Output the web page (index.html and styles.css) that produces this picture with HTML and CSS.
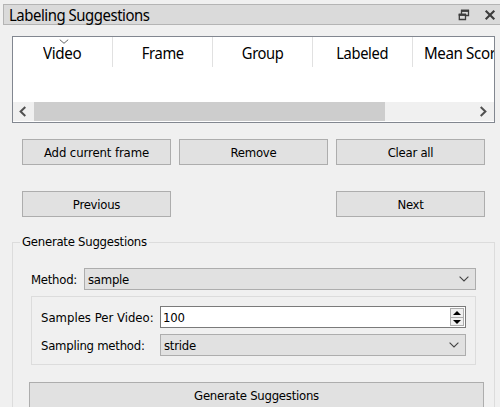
FILE: index.html
```html
<!DOCTYPE html>
<html lang="en">
<head>
<meta charset="utf-8">
<title>Labeling Suggestions</title>
<link rel="stylesheet" href="styles.css">
</head>
<body>
<header class="titlebar">
  <h1>Labeling Suggestions</h1>
  <svg class="float-icon" width="12" height="12" viewBox="0 0 12 12"><g fill="none" stroke="#3c3c3c" stroke-width="1.300"><path d="M3.500 5V1.500H10.500V6.500H8"/><path d="M3 1.800H11" stroke-width="2.200"/><path d="M1.300 5.500H7.500V10.500H1.300Z"/><path d="M.7 5.800H8.100" stroke-width="2.200"/></g></svg>
  <svg class="close-icon" width="12" height="12" viewBox="0 0 12 12"><path d="M1.700 1.700L10.300 10.300M10.300 1.700L1.700 10.300" fill="none" stroke="#3c3c3c" stroke-width="2.100"/></svg>
</header>
<main>
  <section class="table">
    <div class="columns">
      <div class="column"><svg class="sort" width="10" height="6" viewBox="0 0 10 6"><path d="M.8.7L5 4.300L9.200.7" fill="none" stroke="#666"/></svg><span>Video</span></div>
      <div class="column"><span>Frame</span></div>
      <div class="column"><span>Group</span></div>
      <div class="column"><span>Labeled</span></div>
      <div class="column last"><span>Mean Score</span></div>
    </div>
    <div class="scrollbar">
      <svg width="21" height="19" viewBox="0 0 21 19"><path d="M12.300 5L7.600 9.500L12.300 14" fill="none" stroke="#505050" stroke-width="2"/></svg>
      <div class="thumb"></div>
      <svg class="right" width="21" height="19" viewBox="0 0 21 19"><path d="M7.700 5L12.400 9.500L7.700 14" fill="none" stroke="#505050" stroke-width="2"/></svg>
    </div>
  </section>
  <div class="buttons">
    <button class="add">Add current frame</button>
    <button>Remove</button>
    <button>Clear all</button>
    <button>Previous</button>
    <button class="next">Next</button>
  </div>
  <fieldset>
    <legend>Generate Suggestions</legend>
    <div class="method">
      <label>Method:</label>
      <div class="combo"><span>sample</span><svg width="10" height="6" viewBox="0 0 10 6"><path d="M.6.7L5 5L9.400.7" fill="none" stroke="#444" stroke-width="1.100"/></svg></div>
    </div>
    <div class="options">
      <label class="wide">Samples Per Video:</label>
      <div class="spin"><span>100</span>
        <div class="steps">
          <i><svg width="8" height="4" viewBox="0 0 8 4"><path d="M4 0L8 4H0Z"/></svg></i>
          <i><svg width="8" height="4" viewBox="0 0 8 4"><path d="M0 0H8L4 4Z"/></svg></i>
        </div>
      </div>
      <label>Sampling method:</label>
      <div class="combo"><span>stride</span><svg width="10" height="6" viewBox="0 0 10 6"><path d="M.6.7L5 5L9.400.7" fill="none" stroke="#444" stroke-width="1.100"/></svg></div>
    </div>
    <button class="generate">Generate Suggestions</button>
  </fieldset>
</main>
</body>
</html>
```
FILE: styles.css
```css
* { box-sizing: border-box; }
body {
  margin: 0;
  padding-top: 4px;
  height: 407px;
  overflow: hidden;
  background: #f0f0f0;
  color: #000;
  font: 13px/16px "DejaVu Sans Condensed", "DejaVu Sans", sans-serif;
  font-stretch: condensed;
  letter-spacing: -0.25px;
}
span, label { white-space: nowrap; }
svg { display: block; flex: none; }
.titlebar {
  display: flex;
  align-items: center;
  height: 21px;
  margin-left: 3px;
  padding: 0 4px 0 5px;
  background: #dadada;
  border: 1px solid #b4b4b4;
  border-right: 0;
}
h1 {
  flex: 1;
  margin: 0;
  padding-top: 1px;
  font: 16px/20px "Noto Sans", sans-serif;
  letter-spacing: -0.5px;
  transform: scaleX(0.933);
  transform-origin: left;
}
.close-icon { margin-left: 14px; }
main { padding: 11px 5px 0 12px; }
.table {
  width: 483px;
  height: 87px;
  border: 1px solid #828790;
  background: #fff;
  overflow: hidden;
}
.columns {
  display: grid;
  grid-template-columns: repeat(5, 100px);
  height: 65px;
  font: 16px/20px "Noto Sans", sans-serif;
  letter-spacing: -0.4px;
}
.column {
  position: relative;
  height: 30px;
  padding-top: 6px;
  border-right: 1px solid #e1e1e1;
  text-align: center;
}
.column span { display: inline-block; transform: scaleX(0.92); }
.column:first-child span { transform: scaleX(0.95); }
.column.last { padding-left: 11px; text-align: left; }
.column.last span { transform: scaleX(0.945); transform-origin: left; }
.sort { position: absolute; left: 46px; top: 2px; }
.scrollbar { display: flex; height: 19px; background: #f0f0f0; }
.thumb { width: 351px; background: #cdcdcd; }
.right { margin-left: auto; }
.buttons {
  display: grid;
  grid-template-columns: repeat(3, 149px);
  gap: 26px 8px;
  padding: 16px 0 0 10px;
}
button {
  height: 26px;
  padding: 2px 0 0;
  border: 1px solid #adadad;
  border-radius: 0;
  background: #e1e1e1;
  color: #000;
  font: inherit;
  letter-spacing: inherit;
}
.add { letter-spacing: -0.1px; }
.next { grid-column: 3; }
fieldset {
  width: 483px;
  height: 190px;
  margin: 17px 0 0;
  padding: 18px 10px 0 16px;
  border: 1px solid #dcdcdc;
}
legend { height: 16px; margin-left: -9px; padding: 0 2px; }
.method { display: flex; align-items: center; width: 445px; margin-left: 2px; }
.method label { width: 53px; }
label, .combo span, .spin span { padding-top: 1px; }
.combo, .spin {
  display: flex;
  align-items: center;
  justify-content: space-between;
  flex: 1;
  height: 22px;
  padding: 0 6px 0 3px;
  border: 1px solid #adadad;
  background: #e1e1e1;
}
.spin { padding: 0 1px 0 2px; border-color: #7a7a7a; background: #fff; }
.steps { width: 14px; height: 18px; border: 1px solid #adadad; background: #f0f0f0; }
.steps i { display: flex; align-items: center; justify-content: center; height: 8px; }
.steps i + i { border-top: 1px solid #adadad; }
.options {
  display: grid;
  grid-template-columns: 119px 306px;
  gap: 6px 0;
  align-items: center;
  width: 445px;
  height: 69px;
  margin: 6px 0 0 2px;
  padding: 9px 9px 8px;
  border: 1px solid #dcdcdc;
}
.wide { letter-spacing: 0; }
.generate { display: block; width: 455px; height: 28px; padding: 0; margin-top: 17px; }
```
